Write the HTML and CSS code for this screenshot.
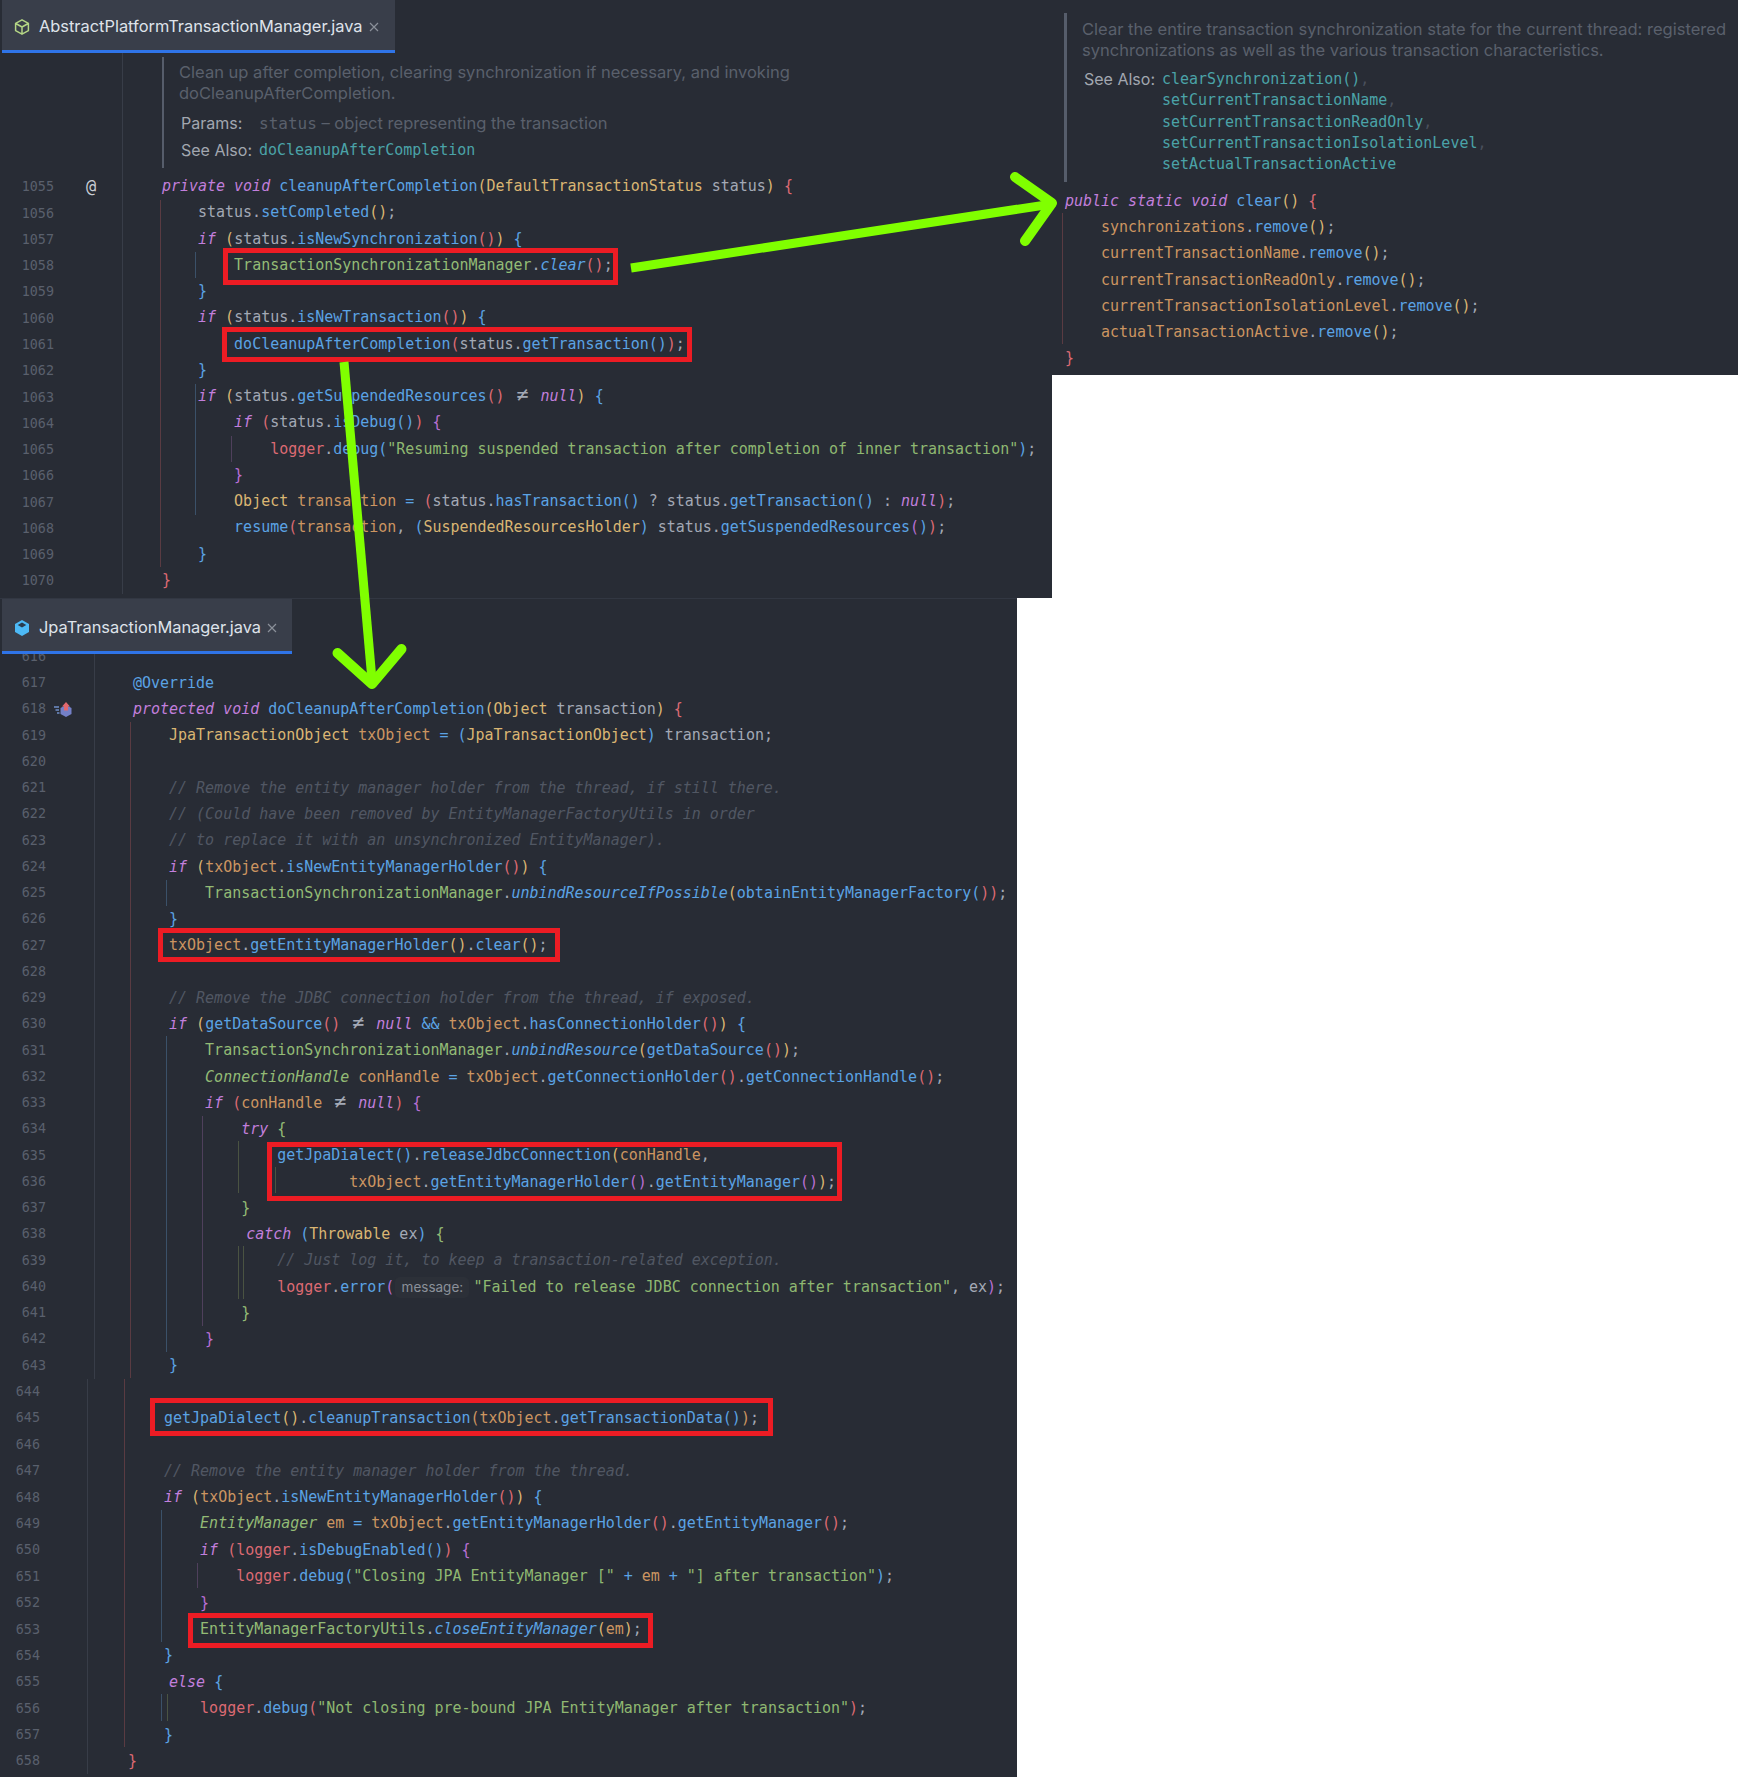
FILE: index.html
```html
<!DOCTYPE html>
<html lang="en">
<head>
<meta charset="utf-8">
<title>Transaction cleanup call chain</title>
<link rel="stylesheet" href="styles.css">
</head>
<body>
<div class="stage">
  <div class="top">
    <section class="panel panel-main">
      <div class="tabbar">
        <div class="tab tab-abstract">
          <svg class="tab-icon" viewBox="0 0 16 16"><path d="M8 .8 14.4 4.4V11.6L8 15.2 1.600 11.600V4.400Z M1.800 4.500 8 8 14.200 4.500 M8 8V15" fill="none" stroke="#b4d585" stroke-width="1.500" stroke-linejoin="round"/></svg>
          <span class="tab-name">AbstractPlatformTransactionManager.java</span>
          <svg class="tab-close" viewBox="0 0 10 10"><path d="M1 1 9 9M9 1 1 9" stroke="#8b909a" stroke-width="1.200"/></svg>
        </div>
      </div>
      <div class="doc-row">
        <div class="gutter-blank"></div>
        <div class="doc">
          <p class="doc-text">Clean up after completion, clearing synchronization if necessary, and invoking<br>doCleanupAfterCompletion.</p>
          <div class="doc-meta doc-params"><span class="meta-label">Params:</span><span class="meta-value"><span class="mono mono-param">status</span> – object representing the transaction</span></div>
          <div class="doc-meta doc-see"><span class="meta-label">See Also:</span><span class="mono link">doCleanupAfterCompletion</span></div>
        </div>
      </div>
      <div class="sec sec-top">
        <div class="row"><div class="num"><span class="n">1055</span><span class="gutter-at">@</span></div><div class="code"><span class="kw">private void</span> <span class="fn">cleanupAfterCompletion</span><span class="y">(</span><span class="ty">DefaultTransactionStatus</span> status<span class="y">)</span> <span class="r">{</span></div></div>
        <div class="row"><div class="num"><span class="n">1056</span></div><div class="code">    status.<span class="fn">setCompleted</span><span class="y">()</span>;</div></div>
        <div class="row"><div class="num"><span class="n">1057</span></div><div class="code">    <span class="kw">if</span> <span class="y">(</span>status.<span class="fn">isNewSynchronization</span><span class="r">()</span><span class="y">)</span> <span class="b">{</span></div></div>
        <div class="row"><div class="num"><span class="n">1058</span></div><div class="code">        <span class="gc">TransactionSynchronizationManager</span>.<span class="it">clear</span><span class="r">()</span>;</div></div>
        <div class="row"><div class="num"><span class="n">1059</span></div><div class="code">    <span class="b">}</span></div></div>
        <div class="row"><div class="num"><span class="n">1060</span></div><div class="code">    <span class="kw">if</span> <span class="y">(</span>status.<span class="fn">isNewTransaction</span><span class="r">()</span><span class="y">)</span> <span class="b">{</span></div></div>
        <div class="row"><div class="num"><span class="n">1061</span></div><div class="code">        <span class="fn">doCleanupAfterCompletion</span><span class="r">(</span>status.<span class="fn">getTransaction</span><span class="b">()</span><span class="r">)</span>;</div></div>
        <div class="row"><div class="num"><span class="n">1062</span></div><div class="code">    <span class="b">}</span></div></div>
        <div class="row"><div class="num"><span class="n">1063</span></div><div class="code">    <span class="kw">if</span> <span class="y">(</span>status.<span class="fn">getSuspendedResources</span><span class="r">()</span> <span class="ne">≠</span> <span class="kw">null</span><span class="y">)</span> <span class="b">{</span></div></div>
        <div class="row"><div class="num"><span class="n">1064</span></div><div class="code">        <span class="kw">if</span> <span class="r">(</span>status.<span class="fn">isDebug</span><span class="b">()</span><span class="r">)</span> <span class="p">{</span></div></div>
        <div class="row"><div class="num"><span class="n">1065</span></div><div class="code">            <span class="lg">logger</span>.<span class="fn">debug</span><span class="b">(</span><span class="st">"Resuming suspended transaction after completion of inner transaction"</span><span class="b">)</span>;</div></div>
        <div class="row"><div class="num"><span class="n">1066</span></div><div class="code">        <span class="p">}</span></div></div>
        <div class="row"><div class="num"><span class="n">1067</span></div><div class="code">        <span class="ty">Object</span> <span class="fd">transaction</span> <span class="op">=</span> <span class="r">(</span>status.<span class="fn">hasTransaction</span><span class="b">()</span> ? status.<span class="fn">getTransaction</span><span class="b">()</span> : <span class="kw">null</span><span class="r">)</span>;</div></div>
        <div class="row"><div class="num"><span class="n">1068</span></div><div class="code">        <span class="fn">resume</span><span class="r">(</span><span class="fd">transaction</span>, <span class="b">(</span><span class="ty">SuspendedResourcesHolder</span><span class="b">)</span> status.<span class="fn">getSuspendedResources</span><span class="p">(</span><span class="b">)</span><span class="r">)</span>;</div></div>
        <div class="row"><div class="num"><span class="n">1069</span></div><div class="code">    <span class="b">}</span></div></div>
        <div class="row"><div class="num"><span class="n">1070</span></div><div class="code"><span class="r">}</span></div></div>
      </div>
    </section>
    <section class="panel panel-side">
      <div class="doc">
        <p class="doc-text">Clear the entire transaction synchronization state for the current thread: registered<br>synchronizations as well as the various transaction characteristics.</p>
        <div class="doc-meta doc-see-list"><span class="meta-label">See Also:</span><div class="mono link-list"><div><span class="link">clearSynchronization()</span><span class="dim">,</span></div><div><span class="link">setCurrentTransactionName</span><span class="dim">,</span></div><div><span class="link">setCurrentTransactionReadOnly</span><span class="dim">,</span></div><div><span class="link">setCurrentTransactionIsolationLevel</span><span class="dim">,</span></div><div><span class="link">setActualTransactionActive</span></div></div></div>
      </div>
      <div class="sec sec-side">
        <div class="row"><div class="code"><span class="kw">public static void</span> <span class="fn">clear</span><span class="y">()</span> <span class="r">{</span></div></div>
        <div class="row"><div class="code">    <span class="fd">synchronizations</span>.<span class="fn">remove</span><span class="y">()</span>;</div></div>
        <div class="row"><div class="code">    <span class="fd">currentTransactionName</span>.<span class="fn">remove</span><span class="y">()</span>;</div></div>
        <div class="row"><div class="code">    <span class="fd">currentTransactionReadOnly</span>.<span class="fn">remove</span><span class="y">()</span>;</div></div>
        <div class="row"><div class="code">    <span class="fd">currentTransactionIsolationLevel</span>.<span class="fn">remove</span><span class="y">()</span>;</div></div>
        <div class="row"><div class="code">    <span class="fd">actualTransactionActive</span>.<span class="fn">remove</span><span class="y">()</span>;</div></div>
        <div class="row"><div class="code"><span class="r">}</span></div></div>
      </div>
    </section>
  </div>

  <section class="panel panel-jpa">
    <div class="tabbar tabbar-jpa">
      <div class="tab tab-jpa">
        <svg class="tab-icon" viewBox="0 0 16 16"><path d="M8 0 15 4V12L8 16 1 12V4Z" fill="#4db9f6"/><path d="M8 2.600 12.300 5 8 7.400 3.700 5Z" fill="#2a3b4d"/></svg>
        <span class="tab-name">JpaTransactionManager.java</span>
        <svg class="tab-close" viewBox="0 0 10 10"><path d="M1 1 9 9M9 1 1 9" stroke="#8b909a" stroke-width="1.200"/></svg>
      </div>
    </div>
    <div class="editor">
      <div class="sec sec-a">
        <div class="row"><div class="num"><span class="n">616</span></div><div class="code"></div></div>
        <div class="row"><div class="num"><span class="n">617</span></div><div class="code"><span class="fn">@Override</span></div></div>
        <div class="row"><div class="num"><span class="n">618</span><svg class="impl-icon" viewBox="0 0 18 15"><path d="M0 5H5M1.500 8H5M3 11H5.500" stroke="#6f8fc9" stroke-width="1.400"/><path d="M12 3 17.500 6V12L12 15 6.500 12V6Z" fill="#7480c8"/><path d="M12 0 16 4.500H14V8.500H10V4.500H8Z" fill="#e2686f"/></svg></div><div class="code"><span class="kw">protected void</span> <span class="fn">doCleanupAfterCompletion</span><span class="y">(</span><span class="ty">Object</span> transaction<span class="y">)</span> <span class="r">{</span></div></div>
        <div class="row"><div class="num"><span class="n">619</span></div><div class="code">    <span class="ty">JpaTransactionObject</span> <span class="fd">txObject</span> <span class="op">=</span> <span class="b">(</span><span class="ty">JpaTransactionObject</span><span class="b">)</span> transaction;</div></div>
        <div class="row"><div class="num"><span class="n">620</span></div><div class="code"></div></div>
        <div class="row"><div class="num"><span class="n">621</span></div><div class="code">    <span class="cm">// Remove the entity manager holder from the thread, if still there.</span></div></div>
        <div class="row"><div class="num"><span class="n">622</span></div><div class="code">    <span class="cm">// (Could have been removed by EntityManagerFactoryUtils in order</span></div></div>
        <div class="row"><div class="num"><span class="n">623</span></div><div class="code">    <span class="cm">// to replace it with an unsynchronized EntityManager).</span></div></div>
        <div class="row"><div class="num"><span class="n">624</span></div><div class="code">    <span class="kw">if</span> <span class="y">(</span><span class="fd">txObject</span>.<span class="fn">isNewEntityManagerHolder</span><span class="r">()</span><span class="y">)</span> <span class="b">{</span></div></div>
        <div class="row"><div class="num"><span class="n">625</span></div><div class="code">        <span class="gc">TransactionSynchronizationManager</span>.<span class="it">unbindResourceIfPossible</span><span class="y">(</span><span class="fn">obtainEntityManagerFactory</span><span class="b">(</span><span class="r">))</span>;</div></div>
        <div class="row"><div class="num"><span class="n">626</span></div><div class="code">    <span class="b">}</span></div></div>
        <div class="row"><div class="num"><span class="n">627</span></div><div class="code">    <span class="fd">txObject</span>.<span class="fn">getEntityManagerHolder</span><span class="y">()</span>.<span class="fn">clear</span><span class="y">()</span>;</div></div>
        <div class="row"><div class="num"><span class="n">628</span></div><div class="code"></div></div>
        <div class="row"><div class="num"><span class="n">629</span></div><div class="code">    <span class="cm">// Remove the JDBC connection holder from the thread, if exposed.</span></div></div>
        <div class="row"><div class="num"><span class="n">630</span></div><div class="code">    <span class="kw">if</span> <span class="y">(</span><span class="fn">getDataSource</span><span class="r">()</span> <span class="ne">≠</span> <span class="kw">null</span> <span class="op">&amp;&amp;</span> <span class="fd">txObject</span>.<span class="fn">hasConnectionHolder</span><span class="r">()</span><span class="y">)</span> <span class="b">{</span></div></div>
        <div class="row"><div class="num"><span class="n">631</span></div><div class="code">        <span class="gc">TransactionSynchronizationManager</span>.<span class="it">unbindResource</span><span class="y">(</span><span class="fn">getDataSource</span><span class="r">()</span><span class="y">)</span>;</div></div>
        <div class="row"><div class="num"><span class="n">632</span></div><div class="code">        <span class="gc it-type">ConnectionHandle</span> <span class="fd">conHandle</span> <span class="op">=</span> <span class="fd">txObject</span>.<span class="fn">getConnectionHolder</span><span class="r">()</span>.<span class="fn">getConnectionHandle</span><span class="r">()</span>;</div></div>
        <div class="row"><div class="num"><span class="n">633</span></div><div class="code">        <span class="kw">if</span> <span class="r">(</span><span class="fd">conHandle</span> <span class="ne">≠</span> <span class="kw">null</span><span class="r">)</span> <span class="p">{</span></div></div>
        <div class="row"><div class="num"><span class="n">634</span></div><div class="code">            <span class="kw">try</span> <span class="g">{</span></div></div>
        <div class="row"><div class="num"><span class="n">635</span></div><div class="code">                <span class="fn">getJpaDialect</span><span class="b">()</span>.<span class="fn">releaseJdbcConnection</span><span class="y">(</span><span class="fd">conHandle</span>,</div></div>
        <div class="row"><div class="num"><span class="n">636</span></div><div class="code">                        <span class="fd">txObject</span>.<span class="fn">getEntityManagerHolder</span><span class="p">()</span>.<span class="fn">getEntityManager</span><span class="p">()</span><span class="y">)</span>;</div></div>
        <div class="row"><div class="num"><span class="n">637</span></div><div class="code">            <span class="g">}</span></div></div>
        <div class="row"><div class="num"><span class="n">638</span></div><div class="code">            <span class="nudge"><span class="kw">catch</span> <span class="b">(</span><span class="ty">Throwable</span> ex<span class="b">)</span> <span class="g">{</span></span></div></div>
        <div class="row"><div class="num"><span class="n">639</span></div><div class="code">                <span class="cm">// Just log it, to keep a transaction-related exception.</span></div></div>
        <div class="row"><div class="num"><span class="n">640</span></div><div class="code">                <span class="lg">logger</span>.<span class="fn">error</span><span class="p">(</span><span class="hint">message:</span><span class="st">"Failed to release JDBC connection after transaction"</span>, ex<span class="p">)</span>;</div></div>
        <div class="row"><div class="num"><span class="n">641</span></div><div class="code">            <span class="g">}</span></div></div>
        <div class="row"><div class="num"><span class="n">642</span></div><div class="code">        <span class="p">}</span></div></div>
        <div class="row"><div class="num"><span class="n">643</span></div><div class="code">    <span class="b">}</span></div></div>
      </div>
      <div class="sec sec-b">
        <div class="row"><div class="num"><span class="n">644</span></div><div class="code"></div></div>
        <div class="row"><div class="num"><span class="n">645</span></div><div class="code">    <span class="fn">getJpaDialect</span><span class="y">()</span>.<span class="fn">cleanupTransaction</span><span class="fd">(</span><span class="fd">txObject</span>.<span class="fn">getTransactionData</span><span class="b">()</span><span class="fd">)</span>;</div></div>
        <div class="row"><div class="num"><span class="n">646</span></div><div class="code"></div></div>
        <div class="row"><div class="num"><span class="n">647</span></div><div class="code">    <span class="cm">// Remove the entity manager holder from the thread.</span></div></div>
        <div class="row"><div class="num"><span class="n">648</span></div><div class="code">    <span class="kw">if</span> <span class="y">(</span><span class="fd">txObject</span>.<span class="fn">isNewEntityManagerHolder</span><span class="r">()</span><span class="y">)</span> <span class="b">{</span></div></div>
        <div class="row"><div class="num"><span class="n">649</span></div><div class="code">        <span class="gc it-type">EntityManager</span> <span class="fd">em</span> <span class="op">=</span> <span class="fd">txObject</span>.<span class="fn">getEntityManagerHolder</span><span class="r">()</span>.<span class="fn">getEntityManager</span><span class="r">()</span>;</div></div>
        <div class="row"><div class="num"><span class="n">650</span></div><div class="code">        <span class="kw">if</span> <span class="r">(</span><span class="lg">logger</span>.<span class="fn">isDebugEnabled</span><span class="b">()</span><span class="r">)</span> <span class="p">{</span></div></div>
        <div class="row"><div class="num"><span class="n">651</span></div><div class="code">            <span class="lg">logger</span>.<span class="fn">debug</span><span class="b">(</span><span class="st">"Closing JPA EntityManager ["</span> <span class="op">+</span> <span class="fd">em</span> <span class="op">+</span> <span class="st">"] after transaction"</span><span class="b">)</span>;</div></div>
        <div class="row"><div class="num"><span class="n">652</span></div><div class="code">        <span class="p">}</span></div></div>
        <div class="row"><div class="num"><span class="n">653</span></div><div class="code">        <span class="gc">EntityManagerFactoryUtils</span>.<span class="it">closeEntityManager</span><span class="y">(</span><span class="fd">em</span><span class="y">)</span>;</div></div>
        <div class="row"><div class="num"><span class="n">654</span></div><div class="code">    <span class="b">}</span></div></div>
        <div class="row"><div class="num"><span class="n">655</span></div><div class="code">    <span class="nudge"><span class="kw">else</span> <span class="b">{</span></span></div></div>
        <div class="row"><div class="num"><span class="n">656</span></div><div class="code">        <span class="lg">logger</span>.<span class="fn">debug</span><span class="r">(</span><span class="st">"Not closing pre-bound JPA EntityManager after transaction"</span><span class="r">)</span>;</div></div>
        <div class="row"><div class="num"><span class="n">657</span></div><div class="code">    <span class="b">}</span></div></div>
        <div class="row"><div class="num"><span class="n">658</span></div><div class="code"><span class="r">}</span></div></div>
      </div>
    </div>
  </section>

  <svg class="overlay" viewBox="0 0 1738 1778" aria-hidden="true">
    <g class="guides">
      <path class="g-bar" d="M162.500 57V168 M1065 13V182"/>
      <path class="g-red" d="M160 200V567 M1062 213V344 M130.500 722V1378 M124.500 1379V1747"/>
      <path class="g-blue" d="M195 252V278 M195 384V515 M166 880V906 M166 1036V1352 M161 1510V1642 M161 1694V1721"/>
      <path class="g-purple" d="M231 436V462 M202 1116V1326 M197 1563V1588"/>
      <path class="g-olive" d="M238.500 1141V1193 M238.500 1246V1299 M243.500 1246V1299 M275 1167V1193 M167 1694V1721"/>
    </g>
    <g class="red-boxes">
      <rect x="225.500" y="250.500" width="390" height="32"/>
      <rect x="224.500" y="329.500" width="465" height="30"/>
      <rect x="160.500" y="930.500" width="397" height="29"/>
      <rect x="269.500" y="1144.500" width="570" height="54"/>
      <rect x="152.500" y="1400.500" width="618" height="33"/>
      <rect x="190.500" y="1615.500" width="460" height="30"/>
    </g>
    <g class="arrows">
      <path d="M631 268 1048 204.600"/>
      <path class="arrow-head" d="M1015 177 1052 203 1025 241"/>
      <path d="M344 362 372 680"/>
      <path class="arrow-head" d="M337.500 653 372 684 401.500 649"/>
    </g>
  </svg>
</div>
</body>
</html>
```
FILE: styles.css
```css
* { box-sizing: border-box; }
html, body { margin: 0; padding: 0; background: #fff; }
.stage { position: relative; width: 1738px; height: 1778px; overflow: hidden; }
.top { display: flex; align-items: flex-start; }
.panel { background: #282c35; color: #abb2bf; }
.panel-main { width: 1052px; height: 598px; }
.panel-side { flex: 1; height: 375px; padding-left: 13px; }
.panel-jpa { width: 1017px; height: 1179px; border-top: 1px solid #323742; }

.tabbar { height: 53px; padding-left: 2px; }
.tabbar-jpa { height: 55px; position: relative; z-index: 1; background: #282c35; }
.tab { height: 100%; display: flex; align-items: center; background: #393e4a; border-bottom: 3px solid #2f74e8; padding-left: 12px; padding-top: 3px; }
.tab-jpa { padding-top: 5px; }
.tab-abstract { width: 393px; }
.tab-jpa { width: 290px; }
.tab-icon { width: 16px; height: 16px; flex: none; }
.tab-name { margin-left: 9px; font: 16.400px/1 Inter, "Liberation Sans", sans-serif; color: #dfe3ea; white-space: nowrap; }
.tab-close { width: 10px; height: 10px; margin-left: 6px; flex: none; }

.doc-row { display: flex; height: 121px; }
.gutter-blank { width: 123px; border-right: 1px solid #383d48; flex: none; }
.doc { border-left: 2px solid #565d6b; padding-left: 15px; font: 16.550px/21px Inter, "Liberation Sans", sans-serif; color: #5a606c; }
.doc-row .doc { margin: 4px 0 6px 39px; padding-top: 5px; flex: 1; }
.panel-side .doc { margin: 13px 0 6px; height: 169px; padding-top: 6px; }
.doc-text { margin: 0; white-space: nowrap; }
.doc-meta { display: flex; margin-left: 2px; }
.doc-params { margin-top: 9px; }
.doc-see { margin-top: 6px; }
.doc-see-list { margin-top: 8px; }
.meta-label { width: 78px; flex: none; color: #a2a7b0; font-size: 16px; }
.meta-value { color: #5a606c; }
.mono { font-family: "DejaVu Sans Mono", "Liberation Mono", monospace; font-size: 14.970px; white-space: pre; }
.mono-param { font-size: 16px; }
.link-list { line-height: 21.250px; }
.link { color: #4ba3a8; }
.dim { color: #4a505c; }

.sec { --row: 26.270px; }
.sec-top { --num: 123px; --n: 54px; --lead: 39px; }
.sec-top .code { margin-top: -1px; }
.sec-side { --row: 26.200px; margin-top: 5.500px; }
.sec-a { --row: 26.250px; --num: 95px; --n: 46px; --lead: 38px; margin-top: -10.500px; }
.sec-b { --row: 26.400px; --num: 88px; --n: 40px; --lead: 40px; }
.editor { height: 1123px; overflow: hidden; }
.row { display: flex; height: var(--row); }
.num { width: var(--num); flex: none; display: flex; align-items: center; border-right: 1px solid #383d48; font: 13.400px/1 "DejaVu Sans Mono", monospace; color: #5a606d; }
.n { width: var(--n); text-align: right; flex: none; }
.gutter-at { margin-left: 32px; font-size: 17px; color: #c9cdd4; position: relative; top: -1px; }
.impl-icon { width: 18px; height: 15px; margin-left: 8px; flex: none; }
.code { margin-left: var(--lead, 0); white-space: pre; font-family: "DejaVu Sans Mono", "Liberation Mono", monospace; font-size: 14.970px; line-height: var(--row); color: #a3a9b5; }

.kw { color: #c27fdc; font-style: italic; }
.fn { color: #5ba3e4; }
.it { color: #5ba3e4; font-style: italic; }
.ty { color: #dab673; }
.fd { color: #cc9561; }
.gc { color: #93bb75; }
.it-type { font-style: italic; }
.lg { color: #dc6a73; }
.st { color: #8fb871; }
.cm { color: #515763; font-style: italic; }
.op { color: #5ba3e4; }
.ne { display: inline-block; width: 18px; text-align: center; font-size: 20px; line-height: 1; color: #a3a9b5; }
.y { color: #dab673; }
.b { color: #5ba3e4; }
.r { color: #dc6a73; }
.g { color: #93bb75; }
.p { color: #b96fd4; }
.nudge { margin-left: 5px; }
.hint { display: inline-block; width: 74px; height: 21px; margin: 0 4px 0 1px; text-align: center; border-radius: 5px; background: #2c3038; color: #8b909a; font: 13.500px/21px Inter, "Liberation Sans", sans-serif; }

.overlay { position: absolute; left: 0; top: 0; width: 1738px; height: 1778px; pointer-events: none; z-index: 2; }
.guides path { fill: none; stroke-width: 1; shape-rendering: crispEdges; }
.guides .g-bar { stroke: #565d6b; stroke-width: 2; }
.g-red { stroke: #5a3b42; }
.g-blue { stroke: #3b5169; }
.g-purple { stroke: #4f405c; }
.g-olive { stroke: #4a5342; }
.red-boxes rect { fill: none; stroke: #ed1c24; stroke-width: 5; }
.arrows path { fill: none; stroke: #80ff00; stroke-width: 9; stroke-linecap: butt; }
.arrows .arrow-head { stroke-width: 10; stroke-linecap: round; stroke-linejoin: round; }
```
